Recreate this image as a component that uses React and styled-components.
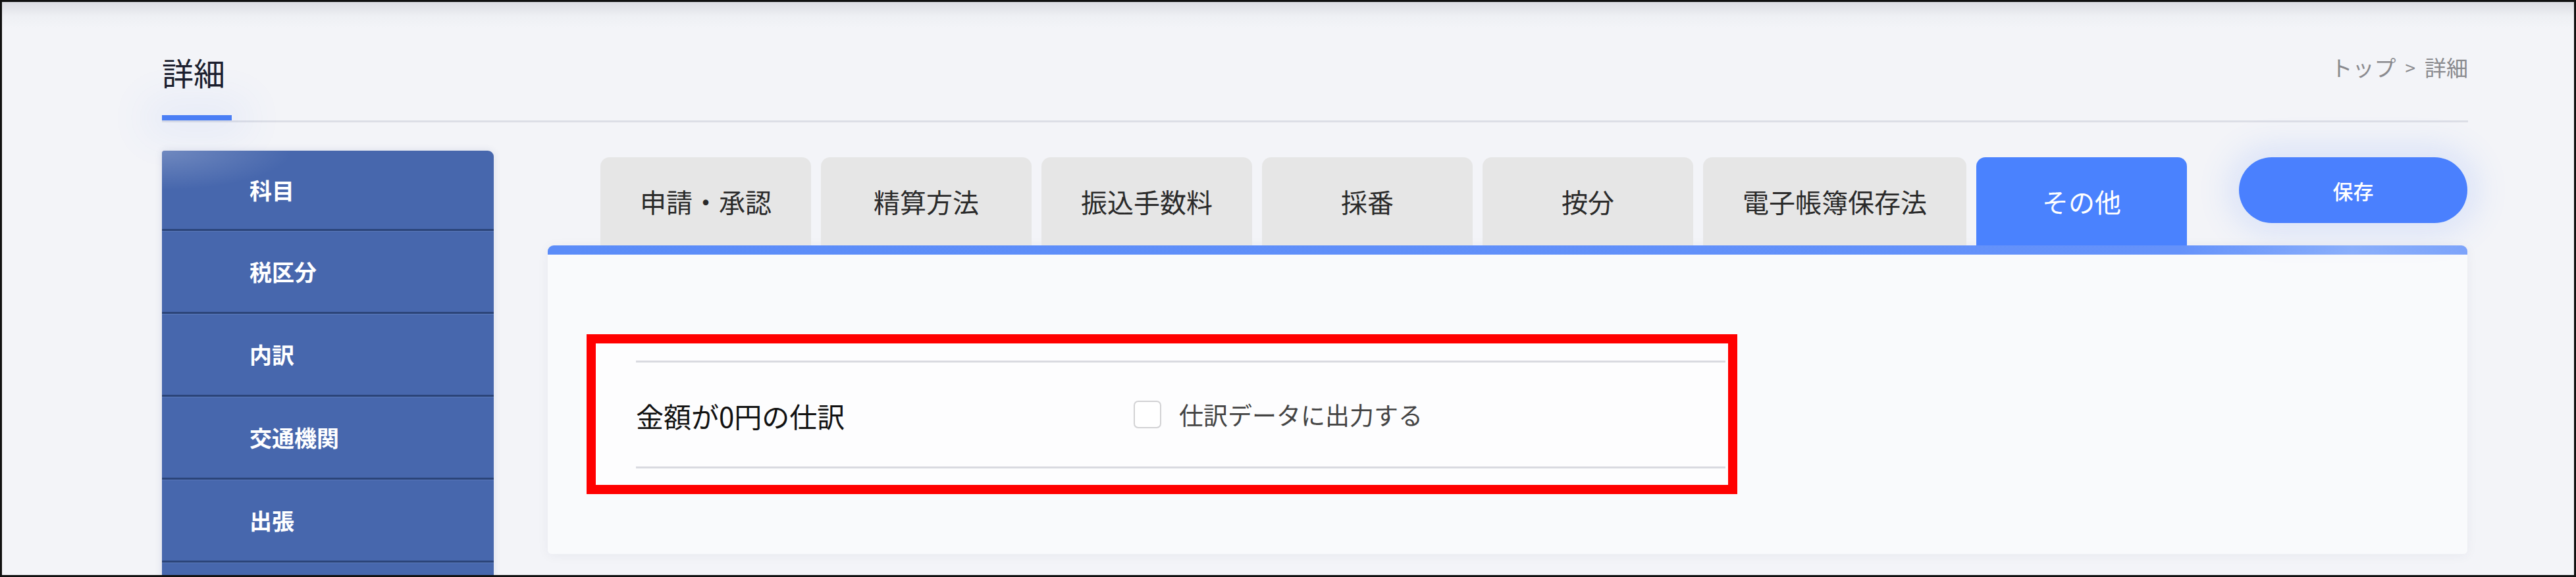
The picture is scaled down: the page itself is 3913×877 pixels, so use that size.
import React from "react";
import styled, { createGlobalStyle } from "styled-components";

const GlobalStyle = createGlobalStyle`
  html, body {
    margin: 0;
    padding: 0;
    background: #f3f4f8;
  }
  * {
    box-sizing: border-box;
  }
`;

const font = `"Noto Sans CJK JP", "Noto Sans", sans-serif`;

const Frame = styled.div`
  width: 3913px;
  height: 877px;
  border: 3px solid #111;
  overflow: hidden;
  background: linear-gradient(to bottom, #dcdde3 0, #eef0f4 22px, #f3f4f8 40px);
  font-family: ${font};
`;

const Container = styled.div`
  width: 3746px;
  padding-left: 243px;
  padding-top: 82px;
`;

const Header = styled.div`
  display: flex;
  justify-content: space-between;
  align-items: flex-start;
`;

const Title = styled.h1`
  margin: 0;
  font-size: 48px;
  line-height: 48px;
  font-weight: 400;
  color: #1b1e2e;
`;

const Breadcrumb = styled.div`
  font-size: 33px;
  line-height: 33px;
  color: #8a8a8e;
  margin-top: 1px;
  display: flex;
  align-items: center;
`;

const CrumbSep = styled.span`
  margin: 0 14px;
  font-size: 28px;
`;

const Rule = styled.div`
  margin-top: 42px;
  border-bottom: 3px solid #dcdee6;
`;

const RuleMark = styled.div`
  width: 106px;
  height: 8px;
  background: #4a7ef5;
  box-shadow: 0 0 60px 24px rgba(74, 126, 245, 0.08);
`;

const Main = styled.div`
  display: flex;
  gap: 82px;
  margin-top: 43px;
`;

const Sidebar = styled.nav`
  width: 504px;
  flex: none;
  border-radius: 4px 9px 0 0;
  overflow: hidden;
  background: #4767ad;
  box-shadow: 0 0 12px rgba(40, 60, 120, 0.12);
  position: relative;
  &::before {
    content: "";
    position: absolute;
    left: 0;
    top: 0;
    width: 200px;
    height: 60px;
    background: radial-gradient(ellipse at top left, rgba(255, 255, 255, 0.22), rgba(255, 255, 255, 0) 70%);
    pointer-events: none;
  }
`;

const SideItem = styled.div`
  height: 126px;
  display: flex;
  align-items: center;
  padding-left: 133px;
  color: #fff;
  font-size: 34px;
  font-weight: 700;
  border-bottom: 3px solid #2b4479;
  box-shadow: inset 0 1px 0 #5a79ba;
  &:first-child {
    height: 122px;
    box-shadow: none;
  }
`;

const Content = styled.div`
  width: 2916px;
  padding-top: 10px;
`;

const TabRow = styled.div`
  display: flex;
  align-items: flex-start;
  gap: 15px;
  padding-left: 80px;
  height: 134px;
`;

const Tab = styled.div`
  width: ${p => p.w || 320}px;
  height: 134px;
  border-radius: 14px 14px 0 0;
  background: ${p => (p.active ? "#4a82fe" : "#e6e6e6")};
  color: ${p => (p.active ? "#fff" : "#2a2a2a")};
  font-size: 40px;
  display: flex;
  align-items: center;
  justify-content: center;
  white-space: nowrap;
`;

const SaveButton = styled.button`
  margin-left: auto;
  width: 347px;
  height: 100px;
  border: none;
  border-radius: 50px;
  background: #4a80fe;
  color: #fff;
  font-family: ${font};
  font-size: 31px;
  font-weight: 500;
  box-shadow: 0 0 50px 14px rgba(74, 128, 254, 0.16);
`;

const Panel = styled.section`
  border-radius: 9px 9px 6px 6px;
  overflow: hidden;
  box-shadow: 0 2px 18px rgba(20, 30, 70, 0.05);
`;

const PanelBar = styled.div`
  height: 14px;
  background: linear-gradient(to right, #5b8cf8 0, #6592fa 85%, #8cb0fb 94%, #7ea4fa 100%);
`;

const PanelBody = styled.div`
  height: 455px;
  background: #f9fafc;
  padding: 121px 0 0 59px;
`;

const Highlight = styled.div`
  width: 1748px;
  border: 14px solid #ff0000;
  background: #fdfdfe;
  padding: 26px 4px 25px 61px;
`;

const SettingRow = styled.div`
  display: grid;
  grid-template-columns: 756px 1fr;
  align-items: center;
  height: 164px;
  border-top: 3px solid #d9dae0;
  border-bottom: 3px solid #d9dae0;
`;

const Label = styled.div`
  font-size: 42px;
  color: #111;
  margin-top: 2px;
`;

const CheckLabel = styled.label`
  display: flex;
  align-items: center;
  gap: 27px;
  font-size: 37px;
  color: #444;
`;

const Check = styled.input.attrs({ type: "checkbox" })`
  appearance: none;
  margin: 0;
  width: 42px;
  height: 42px;
  border: 2px solid #d2d2d4;
  border-radius: 7px;
  background: #fff;
`;

const tabs = [
  { label: "申請・承認" },
  { label: "精算方法" },
  { label: "振込手数料" },
  { label: "採番" },
  { label: "按分" },
  { label: "電子帳簿保存法", w: 400 },
  { label: "その他", active: true },
];

// the sixth entry is cut off by the bottom edge in the screenshot
const menu = ["科目", "税区分", "内訳", "交通機関", "出張", ""];

export default function App() {
  return (
    <>
      <GlobalStyle />
      <Frame>
        <Container>
          <Header>
            <Title>詳細</Title>
            <Breadcrumb>
              トップ<CrumbSep>&gt;</CrumbSep>詳細
            </Breadcrumb>
          </Header>
          <Rule>
            <RuleMark />
          </Rule>
          <Main>
            <Sidebar>
              {menu.map((m, i) => (
                <SideItem key={i}>{m}</SideItem>
              ))}
            </Sidebar>
            <Content>
              <TabRow>
                {tabs.map(t => (
                  <Tab key={t.label} w={t.w} active={t.active}>
                    {t.label}
                  </Tab>
                ))}
                <SaveButton>保存</SaveButton>
              </TabRow>
              <Panel>
                <PanelBar />
                <PanelBody>
                  <Highlight>
                    <SettingRow>
                      <Label>金額が0円の仕訳</Label>
                      <CheckLabel>
                        <Check />
                        仕訳データに出力する
                      </CheckLabel>
                    </SettingRow>
                  </Highlight>
                </PanelBody>
              </Panel>
            </Content>
          </Main>
        </Container>
      </Frame>
    </>
  );
}
